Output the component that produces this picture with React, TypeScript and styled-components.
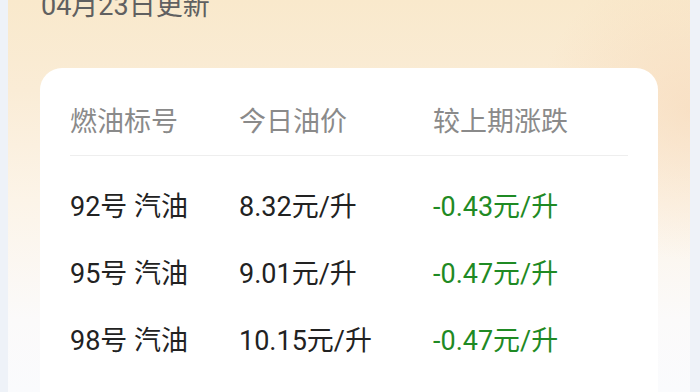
import React from 'react'
import styled, { createGlobalStyle } from 'styled-components'

const GlobalStyle = createGlobalStyle`
    html, body {
        margin: 0;
        padding: 0;
        background: #eef2f8;
        font-family: Roboto, "Noto Sans CJK SC", sans-serif;
        overflow: hidden;
    }
`

const Panel = styled.div`
    margin-left: 8px;
    width: 682px;
    height: 392px;
    box-sizing: border-box;
    padding: 0 32px;
    overflow: hidden;
    background:
        radial-gradient(ellipse 150px 150px at 100% 110px, rgba(247, 216, 184, 0.6), rgba(247, 216, 184, 0) 100%),
        linear-gradient(180deg, #f9e9cc 0%, #faecd6 90px, #fcf4e8 200px, #fbfafa 320px, #fafbfd 100%);
`

const UpdateTime = styled.div`
    margin-top: -7px;
    padding-left: 1px;
    height: 75px;
    font-size: 27px;
    line-height: 27px;
    color: #606060;
`

const Card = styled.div`
    background: #ffffff;
    border-radius: 22px;
    padding: 0 30px;
    height: 360px;
`

const HeaderRow = styled.div`
    display: grid;
    grid-template-columns: 169px 194px 1fr;
    padding: 41px 0 19px;
    border-bottom: 1px solid #eeeeee;
`

const HeaderCell = styled.div`
    font-size: 27px;
    line-height: 27px;
    color: #8a8a8a;
`

const Body = styled.div`
    padding-top: 18px;
`

const Row = styled.div`
    display: grid;
    grid-template-columns: 169px 194px 1fr;
    align-items: center;
    height: 67px;
`

const Cell = styled.div<{ $change?: boolean }>`
    font-size: 27px;
    line-height: 27px;
    color: ${p => (p.$change ? '#1f8a24' : '#222222')};
    white-space: pre;
`

const prices = [
    { name: '92号 汽油', price: '8.32元/升', change: '-0.43元/升' },
    { name: '95号 汽油', price: '9.01元/升', change: '-0.47元/升' },
    { name: '98号 汽油', price: '10.15元/升', change: '-0.47元/升' },
]

const App = () => {
    return (
        <>
            <GlobalStyle />
            <Panel>
                <UpdateTime>04月23日更新</UpdateTime>
                <Card>
                    <HeaderRow>
                        <HeaderCell>燃油标号</HeaderCell>
                        <HeaderCell>今日油价</HeaderCell>
                        <HeaderCell>较上期涨跌</HeaderCell>
                    </HeaderRow>
                    <Body>
                        {prices.map(p => (
                            <Row key={p.name}>
                                <Cell>{p.name}</Cell>
                                <Cell>{p.price}</Cell>
                                <Cell $change>{p.change}</Cell>
                            </Row>
                        ))}
                    </Body>
                </Card>
            </Panel>
        </>
    )
}

export default App
